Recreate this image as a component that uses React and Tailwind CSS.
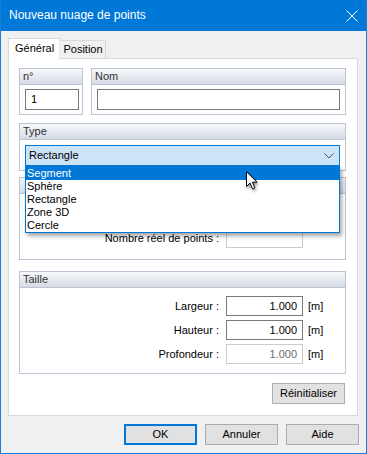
import React from "react";

const Group = ({ title, className, children }) => (
  <div className={`flex flex-col border border-[#bcc5d4] bg-white ${className}`}>
    <div className="h-[16px] shrink-0 border-b border-[#bcc5d4] bg-gradient-to-b from-[#f7f8fa] to-[#d6dbe5] px-[3px] text-[11px] leading-[15px] text-[#333]">
      {title}
    </div>
    {children}
  </div>
);

const Field = ({ label, value, disabled, unit = true }) => (
  <div className="flex h-[20px] items-center">
    <div className="w-[200px] pr-[1px] text-right">{label}</div>
    <div
      className={`ml-[6px] flex h-[20px] w-[77px] items-center justify-end border bg-white pr-[5px] ${
        disabled ? "border-[#cccccc] text-[#6d6d6d]" : "border-[#7a7a7a] text-black"
      }`}
    >
      {value}
    </div>
    {unit && <span className="ml-[5px]">[m]</span>}
  </div>
);

const Button = ({ children, primary, className = "" }) => (
  <button
    className={`flex h-[21px] w-[73px] items-center justify-center bg-[#e1e1e1] text-[11px] text-black ${
      primary ? "border-2 border-[#0078d7]" : "border border-[#adadad]"
    } ${className}`}
  >
    {children}
  </button>
);

const Cursor = () => (
  <svg
    width="14"
    height="21"
    viewBox="0 0 14 21"
    className="absolute left-[244px] top-[170px] z-20 drop-shadow-[1px_2px_1.5px_rgba(0,0,0,0.45)]"
  >
    <path
      d="M1.5 1.5 L1.5 16.5 L5 13 L7.5 18.8 L9.8 17.8 L7.4 12.2 L12 12.2 Z"
      fill="#fff"
      stroke="#000"
      strokeWidth="1"
      strokeLinejoin="miter"
    />
  </svg>
);

export default function App() {
  const items = ["Segment", "Sphère", "Rectangle", "Zone 3D", "Cercle"];

  return (
    <div
      className="relative flex h-[454px] w-[367px] flex-col border-x border-b border-[#1a80d6] text-[11px] text-black"
      style={{ fontFamily: '"Liberation Sans", Arial, sans-serif' }}
    >
      <div className="flex h-[31px] shrink-0 items-center justify-between bg-[#0078d7] pl-[8px] pr-[8px] text-[12px] text-white">
        <span className="pb-[1px]">Nouveau nuage de points</span>
        <svg width="12" height="12" viewBox="0 0 12 12">
          <path d="M0.5 0.5 L11.5 11.5 M11.5 0.5 L0.5 11.5" stroke="#fff" strokeWidth="1" />
        </svg>
      </div>

      <div className="flex flex-1 flex-col bg-[#f0f0f0] pl-[7px] pt-[7px]">
        <div className="relative z-10 -mb-[1px] flex h-[21px] items-end">
          <div className="flex h-[21px] w-[52px] items-center border-x border-t border-[#d9d9d9] bg-white pl-[6px] pb-[1px]">
            Général
          </div>
          <div className="-ml-[1px] flex h-[19px] w-[47px] items-center justify-center border border-l-0 border-[#d9d9d9] bg-[#f0f0f0] pl-[2px]">
            Position
          </div>
        </div>

        <div className="flex h-[358px] w-[350px] flex-col border border-[#d9d9d9] bg-white pl-[10px] pt-[9px]">
          <div className="flex h-[47px] gap-[8px]">
            <Group title="n°" className="w-[64px]">
              <div className="ml-[5px] mt-[4px] flex h-[21px] w-[54px] items-center border border-[#7a7a7a] pl-[5px]">
                1
              </div>
            </Group>
            <Group title="Nom" className="w-[255px]">
              <div className="ml-[5px] mt-[4px] h-[21px] w-[243px] border border-[#7a7a7a]" />
            </Group>
          </div>

          <Group title="Type" className="relative z-10 mt-[8px] h-[48px] w-[327px]">
            <div className="relative ml-[5px] mt-[5px] flex h-[21px] w-[315px] items-center justify-between border border-[#0078d7] bg-[#cce4f7] pl-[3px] pr-[5px]">
              <span>Rectangle</span>
              <svg width="10" height="6" viewBox="0 0 10 6">
                <path d="M0.5 0.5 L5 5 L9.5 0.5" fill="none" stroke="#555" strokeWidth="1" />
              </svg>
              {/* open list of the combo box */}
              <div className="absolute left-[-1px] top-[20px] w-[315px] border border-[#0078d7] bg-white shadow-[2px_3px_4px_rgba(0,0,0,0.35)]">
                {items.map((item, i) => (
                  <div
                    key={item}
                    className={`h-[13px] pl-[1px] leading-[13px] ${
                      i === 0 ? "bg-[#0078d7] text-white" : "text-black"
                    }`}
                  >
                    {item}
                  </div>
                ))}
              </div>
            </div>
          </Group>

          {/* group hidden under the open list; its title is not visible */}
          <Group title="" className="mt-[6px] h-[83px] w-[327px]">
            <div className="mt-[34px]">
              <Field label="Nombre réel de points :" value="" disabled unit={false} />
            </div>
          </Group>

          <Group title="Taille" className="mt-[11px] h-[103px] w-[327px]">
            <div className="mt-[8px] flex flex-col gap-[4px]">
              <Field label="Largeur :" value="1.000" />
              <Field label="Hauteur :" value="1.000" />
              <Field label="Profondeur :" value="1.000" disabled />
            </div>
          </Group>

          <div className="mt-[9px] flex w-[326px] justify-end">
            <Button>Réinitialiser</Button>
          </div>
        </div>

        <div className="mt-[8px] flex justify-end gap-[8px] pr-[7px]">
          <Button primary>OK</Button>
          <Button>Annuler</Button>
          <Button>Aide</Button>
        </div>
      </div>

      <Cursor />
    </div>
  );
}
